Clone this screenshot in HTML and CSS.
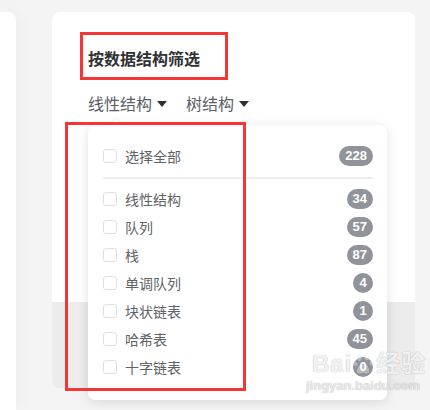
FILE: index.html
```html
<!DOCTYPE html>
<html lang="zh">
<head>
<meta charset="utf-8">
<link rel="stylesheet" href="styles.css">
</head>
<body>
<div class="page">
  <div class="left-card"></div>
  <div class="main-card">
    <div class="title-box"><span class="title">按数据结构筛选</span></div>
    <div class="tabs">
      <span class="tab">线性结构<i class="caret"></i></span>
      <span class="tab">树结构<i class="caret"></i></span>
    </div>
  </div>

  <div class="dropdown">
    <span class="arrow"></span>
    <div class="row"><span class="box"></span><span class="label">选择全部</span><span class="badge">228</span></div>
    <div class="divider"></div>
    <div class="row"><span class="box"></span><span class="label">线性结构</span><span class="badge">34</span></div>
    <div class="row"><span class="box"></span><span class="label">队列</span><span class="badge">57</span></div>
    <div class="row"><span class="box"></span><span class="label">栈</span><span class="badge">87</span></div>
    <div class="row"><span class="box"></span><span class="label">单调队列</span><span class="badge">4</span></div>
    <div class="row"><span class="box"></span><span class="label">块状链表</span><span class="badge">1</span></div>
    <div class="row"><span class="box"></span><span class="label">哈希表</span><span class="badge">45</span></div>
    <div class="row"><span class="box"></span><span class="label">十字链表</span><span class="badge">0</span></div>
  </div>
  <div class="red-frame"></div>

  <div class="watermark">
    <div class="wm-main">Bai<svg class="paw" width="22" height="24" viewBox="0 0 24 24"><ellipse cx="7" cy="6" rx="2.5" ry="3.2"/><ellipse cx="15" cy="5" rx="2.5" ry="3.2"/><ellipse cx="3" cy="12" rx="2.2" ry="2.8"/><ellipse cx="20" cy="11" rx="2.2" ry="2.8"/><path d="M11 11c-4 0-7 6-7 9 0 2 2 3 4 2.5 2-.5 4-.5 6 0 2 .5 4-.5 4-2.5 0-3-3-9-7-9z"/></svg>经验</div>
    <div class="wm-url">jingyan.baidu.com</div>
  </div>
</div>
</body>
</html>
```
FILE: styles.css
```css
* { box-sizing: border-box; }
html, body { margin: 0; padding: 0; }
body {
  width: 430px;
  height: 410px;
  overflow: hidden;
  background: #f4f4f4;
  font-family: "Noto Sans CJK SC", "Microsoft YaHei", sans-serif;
}
.page {
  position: relative;
  display: flex;
  align-items: flex-start;
  padding-top: 12px;
  height: 410px;
}
.left-card {
  width: 16px;
  height: 398px;
  background: #fff;
  border-top-right-radius: 8px;
  box-shadow: 2px 0 14px rgba(0,0,0,0.04);
}
.main-card {
  margin-left: 36px;
  width: 363px;
  height: 376px;
  border-radius: 8px;
  background: linear-gradient(#fff 0, #fff 290px, #ececec 290px, #ececec 100%);
  padding: 20px 0 0 28px;
}
.title-box {
  width: 148px;
  height: 48px;
  border: 3px solid #f63535;
  padding: 13px 0 0 5px;
}
.title {
  font-size: 16px;
  font-weight: 700;
  color: #303133;
  line-height: 20px;
  display: block;
}
.tabs {
  display: flex;
  gap: 19px;
  margin-top: 12px;
  padding-left: 8px;
}
.tab {
  display: flex;
  align-items: center;
  font-size: 16px;
  line-height: 22px;
  color: #5a5e66;
}
.caret {
  display: inline-block;
  margin-left: 5px;
  width: 0;
  height: 0;
  border-left: 5px solid transparent;
  border-right: 5px solid transparent;
  border-top: 6px solid #303133;
  margin-top: 2px;
}
.dropdown {
  position: absolute;
  left: 88px;
  top: 125px;
  width: 299px;
  height: 275px;
  background: #fff;
  border-radius: 7px;
  box-shadow: 0 2px 12px rgba(0,0,0,0.12);
  padding: 17px 14px 0 15px;
}
.arrow {
  position: absolute;
  left: 22px;
  top: -6px;
  width: 0; height: 0;
  border-left: 6px solid transparent;
  border-right: 6px solid transparent;
  border-bottom: 6px solid #fff;
  filter: drop-shadow(0 -1px 1px rgba(0,0,0,0.05));
}
.row {
  display: flex;
  align-items: center;
  height: 28px;
}
.box {
  width: 14px;
  height: 14px;
  border: 1px solid #dcdfe6;
  border-radius: 3px;
  background: #fff;
  margin-right: 8px;
}
.label {
  flex: 1;
  font-size: 14px;
  color: #606266;
  line-height: 20px;
}
.badge {
  min-width: 20px;
  height: 20px;
  padding: 0 6px;
  border-radius: 10px;
  background: #909399;
  color: #fff;
  font-family: "Liberation Sans", Arial, sans-serif;
  font-weight: 700;
  font-size: 13px;
  line-height: 20px;
  text-align: center;
}
.divider {
  height: 2px;
  background: #eeeeee;
  margin: 7px 0 6px 0;
}
.red-frame {
  position: absolute;
  left: 65px;
  top: 122px;
  width: 181px;
  height: 269px;
  border: 3px solid #f63535;
}
.watermark {
  position: absolute;
  left: 312px;
  top: 350px;
  color: rgba(255,255,255,0.85);
  text-shadow: 0 0 1px rgba(0,0,0,0.35);
  font-family: "Liberation Sans", "Noto Sans CJK SC", sans-serif;
}
.wm-main {
  display: flex;
  align-items: center;
  font-size: 24px;
  font-weight: 700;
  line-height: 28px;
  letter-spacing: 1px;
}
.paw {
  fill: rgba(255,255,255,0.35);
  stroke: rgba(0,0,0,0.12);
  stroke-width: 0.6;
  margin: 0 1px;
}
.wm-url {
  font-size: 13px;
  font-weight: 700;
  line-height: 16px;
  margin-left: -6px;
  color: rgba(255,255,255,0.7);
}
```
